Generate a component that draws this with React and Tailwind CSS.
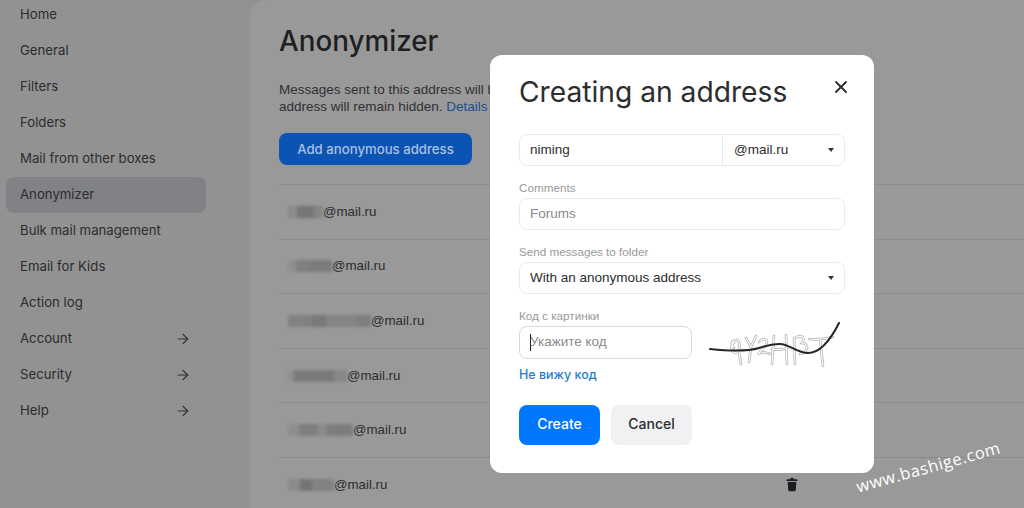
import { ArrowRight, X } from "lucide-react";

const NAV_ITEMS = [
  { label: "Home" },
  { label: "General" },
  { label: "Filters" },
  { label: "Folders" },
  { label: "Mail from other boxes" },
  { label: "Anonymizer", active: true },
  { label: "Bulk mail management" },
  { label: "Email for Kids" },
  { label: "Action log" },
  { label: "Account", arrow: true },
  { label: "Security", arrow: true },
  { label: "Help", arrow: true },
];

// pixelated logins: [width, shade] pieces in front of @mail.ru
const ADDRESSES = [
  [[9, "#8b8b8c"], [17, "#767677"], [9, "#858586"]],
  [[8, "#8f8f90"], [14, "#7f7f80"], [22, "#7c7c7d"]],
  [[24, "#828283"], [14, "#79797a"], [30, "#858586"], [15, "#7f7f80"]],
  [[6, "#8f8f90"], [40, "#7a7a7b"], [13, "#878788"]],
  [[11, "#8e8e8f"], [18, "#7f7f80"], [10, "#8a8a8b"], [26, "#7d7d7e"]],
  [[12, "#8a8a8b"], [12, "#747475"], [22, "#828283"]],
];

const arial = "font-['Liberation_Sans',sans-serif]";
const ui = "font-['Inter',sans-serif]";

function NavItem({ label, active, arrow }) {
  return (
    <div
      className={`mx-1.5 flex h-9 w-[200px] items-center justify-between rounded-lg pl-3.5 pr-[15px] text-[13.2px] text-[#2c2c2e] ${
        active ? "bg-[#818285]" : ""
      }`}
    >
      <span>{label}</span>
      {arrow && <ArrowRight size={16} strokeWidth={1.7} />}
    </div>
  );
}

function TrashIcon() {
  return (
    <svg width="12" height="15" viewBox="0 0 14 16" fill="#1c1c22">
      <path d="M5 1.500C5 .7 5.700 0 6.500 0h1C8.300 0 9 .7 9 1.500V2h3.500c.5 0 .9.400.9.900V4H.6V2.900c0-.5.4-.9.9-.9H5zM2 5h10l-.6 9.500c0 .8-.7 1.500-1.500 1.500H4.100c-.8 0-1.500-.7-1.500-1.500z" />
    </svg>
  );
}

function Caret() {
  return (
    <svg width="8" height="6" viewBox="0 0 8 6" fill="#333">
      <path d="M1 1h6L4 5z" />
    </svg>
  );
}

const SCRIBBLE =
  "M25 24c-5 5-1 13 3 10s3-13-1-12-6 3-2 8M30 34l2 12M37 20l5 9 5-11M42 29l-2 15M50 24c4-5 10-3 7 3l-8 9c4-2 8-2 12 0M65 18l-2 28M77 17l1 29M63 31c5 1 10 1 15-1M86 20c6-4 11-1 7 5 7 0 7 9-2 11M85 20l1 26M100 21c8 1 16 0 24-2M111 21l3 27";

function Captcha() {
  return (
    <svg width="132" height="50" viewBox="0 0 132 50" fill="none">
      <path d={SCRIBBLE} stroke="#b0b0b0" strokeWidth="2.600" strokeLinecap="round" />
      <path d={SCRIBBLE} stroke="#fff" strokeWidth="1.200" strokeLinecap="round" />
      <path
        d="M1 31C20 33 40 33 50 30S62 26 71 26 88 35 99 35 120 25 130 5"
        stroke="#262626"
        strokeWidth="2"
        strokeLinecap="round"
      />
    </svg>
  );
}

function Field({ label, children, className = "" }) {
  return (
    <div className={className}>
      <div className="mb-[3px] h-[14px] text-[11.7px] leading-[14px] text-[#9a9a9a]">{label}</div>
      {children}
    </div>
  );
}

export default function App() {
  return (
    <div className={`relative flex h-[508px] w-[1024px] overflow-hidden bg-[#929293] ${ui}`}>
      {/* Sidebar */}
      <aside className="-mt-[3px] w-[250px] shrink-0">
        {NAV_ITEMS.map((item) => (
          <NavItem key={item.label} {...item} />
        ))}
      </aside>

      {/* Page behind the dialog */}
      <main className="flex-1 rounded-tl-2xl bg-[#999999] pl-[29px]">
        <h1 className="mt-[22px] text-[27.8px] leading-[38px] font-medium text-[#1f1f21]">Anonymizer</h1>
        <p className={`mt-[21px] text-[13.5px] leading-[17px] whitespace-nowrap text-[#303032] ${arial}`}>
          Messages sent to this address will be
          <br />
          address will remain hidden. <span className="text-[#1d4f8f]">Details</span>
        </p>
        <button className="mt-[18px] h-8 w-[193px] rounded-lg bg-[#0b54b4] pt-px text-[13.2px] font-medium text-[#a9c0e0]">
          Add anonymous address
        </button>
        <div className={`mt-[19px] border-t border-[#8b8b8c] text-[13.3px] text-[#2c2c2e] ${arial}`}>
          {ADDRESSES.map((pieces, i) => (
            <div key={i} className="flex h-[54.6px] items-center border-b border-[#8b8b8c] pl-[9px]">
              <span className="flex h-3 blur-[1.5px]">
                {pieces.map(([width, shade], j) => (
                  <span key={j} className="h-full" style={{ width, backgroundColor: shade }} />
                ))}
              </span>
              <span>@mail.ru</span>
              {i === 5 && (
                <span className="mr-[226px] ml-auto">
                  <TrashIcon />
                </span>
              )}
            </div>
          ))}
        </div>
      </main>

      {/* Dialog */}
      <div className={`absolute top-[55px] left-[490px] h-[418px] w-[384px] rounded-xl bg-white px-[29px] ${arial}`}>
        <div className="flex items-start justify-between">
          <h2 className={`mt-[18px] text-[28.2px] leading-[38px] font-normal text-[#2c2d2e] ${ui}`}>
            Creating an address
          </h2>
          <X size={20} strokeWidth={2.2} className="mt-[22px] mr-[-6px] text-[#2c2d2e]" />
        </div>

        <div className="mt-[23px] flex h-8 rounded-lg border border-[#e9eaec] text-[13.5px] text-[#2c2d2e]">
          <div className="flex flex-1 items-center pl-[10px]">niming</div>
          <div className="flex w-[122px] items-center justify-between border-l border-[#e9eaec] pr-[9px] pl-[11px]">
            @mail.ru
            <Caret />
          </div>
        </div>

        <Field label="Comments" className="mt-[15px]">
          <div className="flex h-8 items-center rounded-lg border border-[#e9eaec] pl-[10px] text-[13.5px] text-[#8a8a8c]">
            Forums
          </div>
        </Field>

        <Field label="Send messages to folder" className="mt-[15px]">
          <div className="flex h-8 items-center justify-between rounded-lg border border-[#e9eaec] pr-[9px] pl-[10px] text-[13.5px] text-[#2c2d2e]">
            With an anonymous address
            <Caret />
          </div>
        </Field>

        <div className="mt-[15px] flex">
          <Field label="Код с картинки">
            <div className="relative flex h-[33px] w-[173px] items-center rounded-lg border border-[#d8d9dc] pl-[10px] text-[13.5px] text-[#8a8a8c]">
              <span className="absolute top-[7px] left-[10px] h-[17px] w-px bg-[#222]" />
              Укажите код
            </div>
          </Field>
          <div className="mt-[9px] -mb-[10px] ml-[17px]">
            <Captcha />
          </div>
        </div>

        <div className={`mt-[8px] text-[12.5px] leading-4 font-medium text-[#2a7bd0] ${ui}`}>Не вижу код</div>

        <div className={`mt-[22px] flex gap-[11px] text-sm font-medium ${ui}`}>
          <button className="h-10 w-[81px] rounded-lg bg-[#0077ff] pb-[2px] text-white">Create</button>
          <button className="h-10 w-[81px] rounded-lg bg-[#f0f1f3] pb-[2px] text-[#2c2d2e]">Cancel</button>
        </div>
      </div>

      {/* Watermark */}
      <div className="absolute top-[455px] left-[854px] -rotate-[15.5deg] font-['Open_Sans',sans-serif] text-[16.5px] leading-6 tracking-[0.6px] whitespace-nowrap text-white">
        www.bashige.com
      </div>
    </div>
  );
}
